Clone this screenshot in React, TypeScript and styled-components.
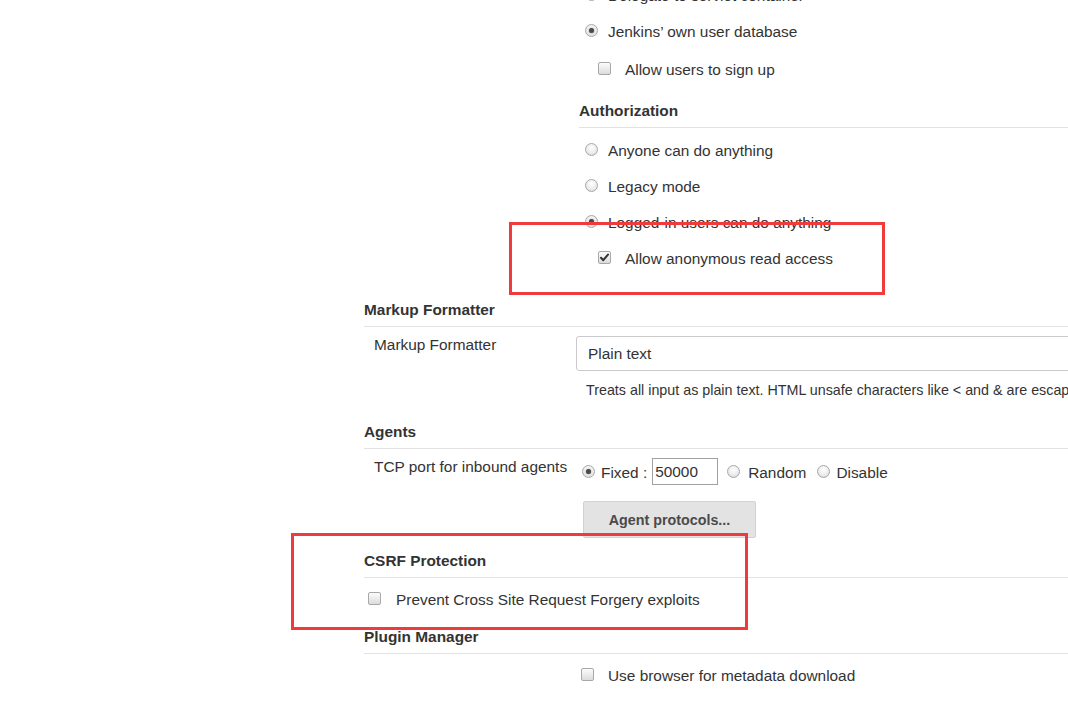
import React from 'react';
import styled, { createGlobalStyle, css } from 'styled-components';

const Global = createGlobalStyle`
  html, body { margin: 0; padding: 0; background: #fff; overflow: hidden; }
  body {
    font-family: "Liberation Sans", Arial, Helvetica, sans-serif;
    font-size: 15.4px;
    color: #333;
  }
`;

const Page = styled.div`
  position: relative;
  display: flow-root;
  padding-left: 364px;
  width: 1100px;
`;

const FieldRow = styled.div`
  display: grid;
  grid-template-columns: 212px 1fr;
`;

const FieldLabel = styled.div`
  padding: 8px 0 0 10px;
  line-height: 20px;
  white-space: nowrap;
`;

const FieldValue = styled.div`
  min-width: 0;
`;

const OptionRow = styled.label<{ $indent: number; $gap: number; $height?: number; $top?: number; $pad?: number }>`
  display: flex;
  align-items: center;
  box-sizing: border-box;
  height: ${(p) => p.$height ?? 36}px;
  margin-top: ${(p) => p.$top ?? 0}px;
  padding-top: ${(p) => p.$pad ?? 0}px;
  padding-left: ${(p) => p.$indent}px;
  gap: ${(p) => p.$gap}px;
  line-height: 20px;
  white-space: nowrap;
`;

const OptionText = styled.span`
  padding-top: 3px;
`;

const RadioDot = styled.span<{ $checked?: boolean; $lead?: number }>`
  flex: none;
  position: relative;
  width: 13px;
  height: 13px;
  box-sizing: border-box;
  margin-left: ${(p) => p.$lead ?? 0}px;
  border-radius: 50%;
  border: 1px solid #a8a8a8;
  background: radial-gradient(circle at 50% 35%, #ffffff 0%, #ececec 55%, #d4d4d4 100%);
  ${(p) =>
    p.$checked &&
    css`
      &::after {
        content: '';
        position: absolute;
        left: 3px;
        top: 3px;
        width: 5px;
        height: 5px;
        border-radius: 50%;
        background: #4a4a4a;
        box-shadow: 0 0 1.5px #777;
      }
    `}
`;

const CheckBoxBox = styled.span`
  flex: none;
  position: relative;
  width: 13px;
  height: 13px;
  box-sizing: border-box;
  border: 1px solid #a8a8a8;
  border-radius: 2px;
  background: linear-gradient(#fcfcfc, #dcdcdc);
  display: flex;
  align-items: center;
  justify-content: center;
`;

const CheckBox = ({ checked }: { checked?: boolean }) => (
  <CheckBoxBox>
    {checked && (
      <svg width="11" height="11" viewBox="0 0 11 11">
        <path d="M2 5.8 L4.3 8.2 L9 2.6" fill="none" stroke="#333" strokeWidth="2" strokeLinecap="round" strokeLinejoin="round" />
      </svg>
    )}
  </CheckBoxBox>
);

const SectionHeader = styled.div<{ $gap?: number; $shift?: number }>`
  margin-top: ${(p) => p.$gap ?? 0}px;
  margin-left: ${(p) => p.$shift ?? 0}px;
  padding: 13px 0 6px 0;
  line-height: 20px;
  font-weight: bold;
  border-bottom: 1px solid #e2e2e2;
  white-space: nowrap;
`;

const Select = styled.div`
  margin-top: 9px;
  width: 700px;
  height: 35px;
  box-sizing: border-box;
  border: 1px solid #cacaca;
  border-radius: 3px;
  padding-left: 11px;
  display: flex;
  align-items: center;
  background: #fff;
`;

const HelpText = styled.div`
  margin-top: 10px;
  padding-left: 10px;
  line-height: 18px;
  font-size: 14.3px;
  white-space: nowrap;
  color: #333;
`;

const PortLine = styled.div`
  display: flex;
  align-items: center;
  margin-top: 9px;
  height: 27px;
  padding-left: 6px;
  white-space: nowrap;
`;

const ChoiceText = styled.span<{ $gap: number }>`
  margin-left: ${(p) => p.$gap}px;
  padding-top: 3px;
`;

const PortInput = styled.div`
  margin-left: 5px;
  width: 66px;
  height: 27px;
  box-sizing: border-box;
  border: 1px solid #a0a0a0;
  padding: 3px 0 0 2px;
  line-height: 20px;
  background: #fff;
`;

const Button = styled.div`
  margin: 16px 0 0 7px;
  width: 173px;
  height: 37px;
  box-sizing: border-box;
  border: 1px solid #d2d2d2;
  border-radius: 2px;
  background: #e3e3e3;
  color: #4a4a4a;
  font-weight: bold;
  font-size: 14.3px;
  display: flex;
  align-items: center;
  justify-content: center;
`;

const Annotation = styled.div<{ $x: number; $y: number; $w: number; $h: number }>`
  position: absolute;
  left: ${(p) => p.$x}px;
  top: ${(p) => p.$y}px;
  width: ${(p) => p.$w}px;
  height: ${(p) => p.$h}px;
  box-sizing: border-box;
  border: 3px solid #ef3b3b;
  pointer-events: none;
`;

export default function App() {
  return (
    <>
      <Global />
      <Page>
        <FieldRow>
          <FieldLabel />
          <FieldValue>
            <OptionRow $indent={9} $gap={10} $top={-24}>
              <RadioDot />
              <OptionText>Delegate to servlet container</OptionText>
            </OptionRow>
            <OptionRow $indent={9} $gap={10}>
              <RadioDot $checked />
              <OptionText>Jenkins’ own user database</OptionText>
            </OptionRow>
            <OptionRow $indent={22} $gap={14} $height={40}>
              <CheckBox />
              <OptionText>Allow users to sign up</OptionText>
            </OptionRow>
            <SectionHeader $shift={3}>Authorization</SectionHeader>
            <OptionRow $indent={9} $gap={10} $top={3}>
              <RadioDot />
              <OptionText>Anyone can do anything</OptionText>
            </OptionRow>
            <OptionRow $indent={9} $gap={10}>
              <RadioDot />
              <OptionText>Legacy mode</OptionText>
            </OptionRow>
            <OptionRow $indent={9} $gap={10}>
              <RadioDot $checked />
              <OptionText>Logged-in users can do anything</OptionText>
            </OptionRow>
            <OptionRow $indent={22} $gap={14}>
              <CheckBox checked />
              <OptionText>Allow anonymous read access</OptionText>
            </OptionRow>
          </FieldValue>
        </FieldRow>

        <SectionHeader $gap={12}>Markup Formatter</SectionHeader>
        <FieldRow>
          <FieldLabel>Markup Formatter</FieldLabel>
          <FieldValue>
            <Select>Plain text</Select>
            <HelpText>
              Treats all input as plain text. HTML unsafe characters like &lt; and &amp; are escaped to their respective character entities.
            </HelpText>
          </FieldValue>
        </FieldRow>

        <SectionHeader $gap={10}>Agents</SectionHeader>
        <FieldRow>
          <FieldLabel>TCP port for inbound agents</FieldLabel>
          <FieldValue>
            <PortLine>
              <RadioDot $checked />
              <ChoiceText $gap={6}>Fixed :</ChoiceText>
              <PortInput>50000</PortInput>
              <RadioDot $lead={9} />
              <ChoiceText $gap={8}>Random</ChoiceText>
              <RadioDot $lead={11} />
              <ChoiceText $gap={6}>Disable</ChoiceText>
            </PortLine>
            <Button>Agent protocols...</Button>
          </FieldValue>
        </FieldRow>

        <SectionHeader>CSRF Protection</SectionHeader>
        <OptionRow $indent={4} $gap={15} $pad={4}>
          <CheckBox />
          <OptionText>Prevent Cross Site Request Forgery exploits</OptionText>
        </OptionRow>

        <SectionHeader>Plugin Manager</SectionHeader>
        <FieldRow>
          <FieldLabel />
          <FieldValue>
            <OptionRow $indent={5} $gap={14} $height={40}>
              <CheckBox />
              <OptionText>Use browser for metadata download</OptionText>
            </OptionRow>
          </FieldValue>
        </FieldRow>

        <Annotation $x={509} $y={222} $w={376} $h={73} />
        <Annotation $x={291} $y={533} $w={457} $h={97} />
      </Page>
    </>
  );
}
